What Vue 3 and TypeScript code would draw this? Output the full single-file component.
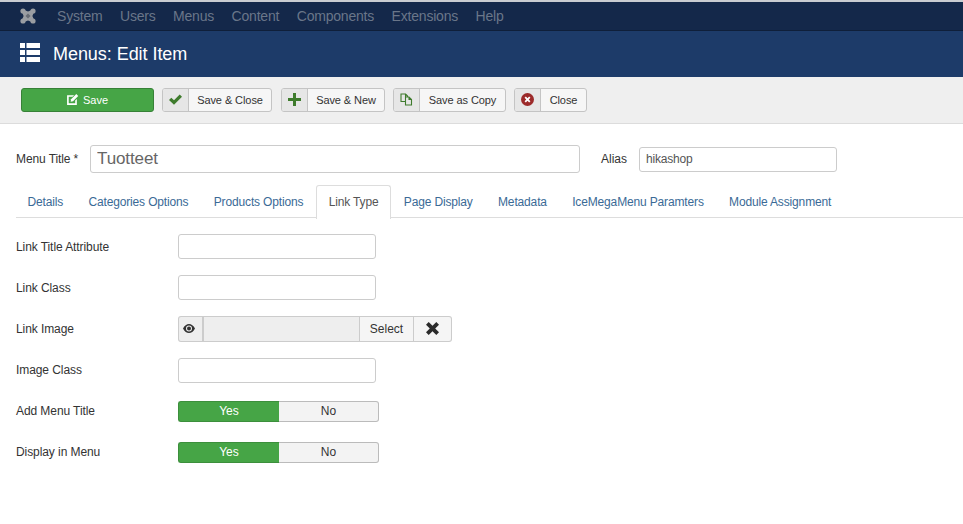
<script setup lang="ts">
const nav: string[] = ['System', 'Users', 'Menus', 'Content', 'Components', 'Extensions', 'Help']
const tabs: string[] = ['Details', 'Categories Options', 'Products Options', 'Link Type', 'Page Display', 'Metadata', 'IceMegaMenu Paramters', 'Module Assignment']
</script>

<template>
  <div class="page">
    <div class="topline"></div>
    <nav class="navbar">
      <svg class="logo" width="16" height="16" viewBox="0 0 16 16">
        <g fill="#9a9da2">
          <circle cx="3" cy="3" r="2.600" />
          <circle cx="13" cy="3" r="2.600" />
          <circle cx="3" cy="13" r="2.600" />
          <circle cx="13" cy="13" r="2.600" />
          <path d="M3 1.500 8 3.600 13 1.500 14.500 3 12.400 8 14.500 13 13 14.500 8 12.400 3 14.500 1.500 13 3.600 8 1.500 3z" />
        </g>
        <path d="M8 5.500 10.500 8 8 10.500 5.500 8z" fill="#666b74" />
      </svg>
      <span v-for="n in nav" :key="n" class="navitem">{{ n }}</span>
    </nav>
    <header class="titlebar">
      <svg class="listicon" width="20" height="19" viewBox="0 0 20 19">
        <g fill="#fff">
          <rect x="0" y="0" width="5" height="5" />
          <rect x="6.500" y="0" width="13.500" height="5" />
          <rect x="0" y="7" width="5" height="5" />
          <rect x="6.500" y="7" width="13.500" height="5" />
          <rect x="0" y="14" width="5" height="5" />
          <rect x="6.500" y="14" width="13.500" height="5" />
        </g>
      </svg>
      <h1>Menus: Edit Item</h1>
    </header>
    <div class="toolbar">
      <button class="save">
        <svg width="13" height="13" viewBox="0 0 12 12">
          <path fill="#fff" d="M1 2h6.500L6 3.500H2.500v6h6V7L10 5.500V11H1z" />
          <path fill="#fff" d="M9.500 1 11.300 2.800 6.500 7.600 4.300 8 4.700 5.800z" />
        </svg>
        Save
      </button>
      <div class="tb w110">
        <span class="ico">
          <svg width="13" height="11" viewBox="0 0 13 11"><path fill="#3e7b2c" d="M0 6 2.300 3.700 5 6.300 10.700.5 13 2.800 5 10.800z" /></svg>
        </span>
        <span class="lbl">Save &amp; Close</span>
      </div>
      <div class="tb w104">
        <span class="ico">
          <svg width="13" height="13" viewBox="0 0 13 13"><path fill="#3e7b2c" d="M5 0h3v5h5v3H8v5H5V8H0V5h5z" /></svg>
        </span>
        <span class="lbl">Save &amp; New</span>
      </div>
      <div class="tb w113">
        <span class="ico">
          <svg width="13" height="13" viewBox="0 0 13 13">
            <path fill="none" stroke="#3e7b2c" stroke-width="1.100" d="M1 1h4.500v7.500H1zM5.500 4H9l2.500 2.500V12h-6V8.500M9 4v2.500h2.500M5.500 1 7.500 3v1" />
          </svg>
        </span>
        <span class="lbl">Save as Copy</span>
      </div>
      <div class="tb w73">
        <span class="ico">
          <svg width="13" height="13" viewBox="0 0 13 13">
            <circle cx="6.500" cy="6.500" r="6.500" fill="#9c2a2a" />
            <path d="M4.200 4.200l4.600 4.600M8.800 4.200 4.200 8.800" stroke="#fff" stroke-width="1.800" />
          </svg>
        </span>
        <span class="lbl">Close</span>
      </div>
    </div>
    <main class="content">
      <div class="titlerow">
        <label class="mt">Menu Title *</label>
        <input class="big" value="Tuotteet" />
        <label class="al">Alias</label>
        <input class="alias" value="hikashop" />
      </div>
      <ul class="tabs">
        <li v-for="t in tabs" :key="t" :class="{ active: t === 'Link Type' }">{{ t }}</li>
      </ul>
      <div class="form">
        <div class="row">
          <label>Link Title Attribute</label>
          <input class="txt" />
        </div>
        <div class="row">
          <label>Link Class</label>
          <input class="txt" />
        </div>
        <div class="row">
          <label>Link Image</label>
          <div class="media">
            <span class="eye">
              <svg width="12" height="9" viewBox="0 0 12 9">
                <path fill="#333" fill-rule="evenodd" d="M0 4.500C1.500 1.500 3.700 0 6 0s4.500 1.500 6 4.500C10.500 7.500 8.300 9 6 9S1.500 7.500 0 4.500zM6 1.500a3 3 0 1 0 0 6 3 3 0 0 0 0-6z" />
                <circle cx="6" cy="4.500" r="2" fill="#333" />
              </svg>
            </span>
            <span class="path"></span>
            <span class="sel">Select</span>
            <span class="clr">
              <svg width="13" height="13" viewBox="0 0 13 13"><path fill="#2b2b2b" d="M2.700 0 6.500 3.800 10.300 0 13 2.700 9.200 6.500 13 10.300 10.300 13 6.500 9.200 2.700 13 0 10.300 3.800 6.500 0 2.700z" /></svg>
            </span>
          </div>
        </div>
        <div class="row">
          <label>Image Class</label>
          <input class="txt" />
        </div>
        <div class="row">
          <label>Add Menu Title</label>
          <div class="sw"><span class="yes">Yes</span><span class="no">No</span></div>
        </div>
        <div class="row">
          <label>Display in Menu</label>
          <div class="sw"><span class="yes">Yes</span><span class="no">No</span></div>
        </div>
      </div>
    </main>
  </div>
</template>

<style>
html, body { margin: 0; background: #fff; }
</style>

<style scoped>
.page { width: 963px; height: 524px; overflow: hidden; font-family: "Liberation Sans", Arial, sans-serif; font-size: 12px; color: #333; background: #fff; }
.topline { height: 2px; background: #c9ccd1; }
.navbar { height: 28px; background: #14284a; border-bottom: 1px solid #0f1f3a; display: flex; align-items: center; padding-left: 20px; }
.logo { margin-right: 21px; }
.navitem { color: #6a7689; font-size: 14px; margin-right: 17.500px; letter-spacing: -0.2px; }
.titlebar { height: 46px; background: #1d3b69; display: flex; align-items: center; padding-left: 20px; }
.listicon { margin-top: -4px; }
.titlebar h1 { margin: 0 0 0 13px; color: #fff; font-size: 18px; font-weight: 400; line-height: 46px; letter-spacing: -0.05px; }
.toolbar { height: 47px; background: #efefef; border-bottom: 1px solid #dcdcdc; display: flex; align-items: center; padding-left: 21px; padding-bottom: 1px; box-sizing: border-box; }
.save { width: 133px; height: 24px; margin: 0 8px 0 0; padding: 0 1px 0 0; background: #46a546; border: 1px solid #378137; border-radius: 3px; color: #fff; font: 11px "Liberation Sans", Arial, sans-serif; display: flex; align-items: center; justify-content: center; gap: 4px; }
.tb { height: 24px; box-sizing: border-box; margin-right: 8px; border: 1px solid #c4c4c4; border-radius: 3px; background: #f6f6f6; display: flex; align-items: stretch; font-size: 11px; color: #333; letter-spacing: -0.08px; }
.w110 { width: 110px; margin-right: 9px; }
.w104 { width: 104px; }
.w113 { width: 113px; }
.w73 { width: 73px; }
.ico { width: 25px; flex: none; background: #e6e6e6; border-right: 1px solid #c4c4c4; display: flex; align-items: center; justify-content: center; border-radius: 2px 0 0 2px; }
.lbl { flex: 1; display: flex; align-items: center; justify-content: center; }
.content { padding: 21px 0 0 16px; }
.titlerow { display: flex; align-items: center; height: 28px; }
.mt { width: 74px; font-size: 12px; letter-spacing: -0.1px; }
.big { width: 490px; height: 28px; box-sizing: border-box; border: 1px solid #ccc; border-radius: 3px; padding: 0 6px; font: 17px "Liberation Sans", Arial, sans-serif; letter-spacing: -0.1px; color: #666; outline: 0; }
.al { margin-left: 21px; width: 38px; font-size: 12px; }
.alias { width: 198px; height: 25px; box-sizing: border-box; border: 1px solid #ccc; border-radius: 3px; padding: 0 6px; font: 12px "Liberation Sans", Arial, sans-serif; letter-spacing: -0.2px; color: #555; outline: 0; }
.tabs { list-style: none; margin: 12px 0 0; padding: 0; height: 33px; box-sizing: border-box; border-bottom: 1px solid #ddd; display: flex; font-size: 12px; letter-spacing: -0.15px; }
.tabs li { padding: 0 11.500px; line-height: 33px; box-sizing: content-box; height: 32px; color: #3a6a96; border: 1px solid transparent; border-bottom: 0; border-radius: 3px 3px 0 0; white-space: nowrap; margin-right: 0.300px; }
.tabs li:first-child { margin-left: -1px; }
.tabs li.active { color: #555; background: #fff; border-color: #ddd; height: 33px; }
.form { padding-top: 15.500px; display: flex; flex-direction: column; }
.row { display: flex; align-items: center; height: 26px; margin-bottom: 15.200px; }
.row label { width: 162px; flex: none; font-size: 12px; letter-spacing: -0.08px; }
.txt { width: 198px; height: 25px; box-sizing: border-box; border: 1px solid #ccc; border-radius: 3px; outline: 0; }
.media { display: flex; height: 26px; }
.eye { width: 26px; box-sizing: border-box; background: #eee; border: 1px solid #ccc; border-right: 2px solid #ccc; border-radius: 3px 0 0 3px; display: flex; align-items: center; justify-content: center; padding-right: 3px; }
.path { width: 156px; box-sizing: border-box; background: #eee; border: 1px solid #ccc; border-left: 0; }
.sel { width: 54px; box-sizing: border-box; background: #f5f5f5; border: 1px solid #ccc; border-left: 0; display: flex; align-items: center; justify-content: center; font-size: 12px; }
.clr { width: 38px; box-sizing: border-box; background: #f5f5f5; border: 1px solid #ccc; border-left: 0; border-radius: 0 3px 3px 0; display: flex; align-items: center; justify-content: center; }
.sw { display: flex; width: 201px; height: 21px; font-size: 12px; }
.yes { width: 101px; background: #46a546; color: #fff; border: 1px solid #3c8f3c; border-right: 0; border-radius: 3px 0 0 3px; display: flex; align-items: center; justify-content: center; box-sizing: border-box; }
.no { width: 100px; background: #f3f3f3; color: #333; border: 1px solid #bbb; border-left: 0; border-radius: 0 3px 3px 0; display: flex; align-items: center; justify-content: center; box-sizing: border-box; }
</style>
